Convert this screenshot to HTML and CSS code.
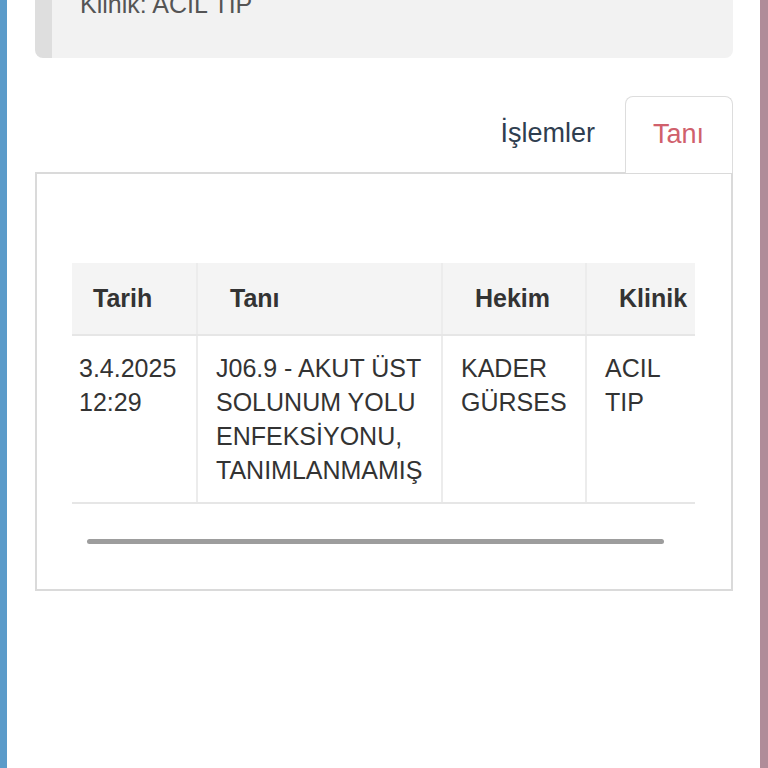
FILE: index.html
```html
<!DOCTYPE html>
<html lang="tr">
<head>
    <meta charset="UTF-8">
    <meta name="viewport" content="width=device-width, initial-scale=1.0">
    <link rel="stylesheet" href="styles.css">
    <title>Tanı</title>
</head>
<body>
    <div class="frame">
        <div class="info-card">
            <p class="info-line">Klinik: ACIL TIP</p>
        </div>

        <div class="tabs">
            <span class="tab">İşlemler</span>
            <span class="tab active">Tanı</span>
        </div>

        <div class="tab-panel">
            <div class="table-scroll">
                <table class="diag-table">
                    <thead>
                        <tr>
                            <th class="col-date">Tarih</th>
                            <th class="col-diag">Tanı</th>
                            <th class="col-doc">Hekim</th>
                            <th class="col-clinic">Klinik</th>
                        </tr>
                    </thead>
                    <tbody>
                        <tr>
                            <td>3.4.2025<br>12:29</td>
                            <td>J06.9 - AKUT ÜST<br>SOLUNUM YOLU<br>ENFEKSİYONU,<br>TANIMLANMAMIŞ</td>
                            <td>KADER<br>GÜRSES</td>
                            <td>ACIL<br>TIP</td>
                        </tr>
                    </tbody>
                </table>
            </div>
            <div class="scroll-track">
                <div class="scroll-thumb"></div>
            </div>
        </div>
    </div>
</body>
</html>
```

FILE: styles.css
```css
html, body {
    margin: 0;
    padding: 0;
    height: 100%;
}
body {
    background-color: #fff;
    font-family: "Liberation Sans", Arial, sans-serif;
    color: #333;
    border-left: 7px solid #5b9bc9; /* 左侧蓝条 */
    border-right: 8px solid #b08c99; /* 右侧色条 */
    box-sizing: border-box;
    overflow: hidden;
}
.frame {
    padding: 0 27px 0 28px;
}

/* 顶部信息卡 */
.info-card {
    margin-top: -40px;
    height: 98px;
    background-color: #f2f2f2;
    border-left: 17px solid #dedede;
    border-radius: 0 0 8px 8px;
    padding-left: 28px;
}
.info-line {
    margin: 0;
    padding-top: 30px;
    font-size: 25px;
    color: #555;
}

/* 标签页 */
.tabs {
    display: flex;
    justify-content: flex-end;
    align-items: stretch;
    margin-top: 38px;
    height: 76px;
    position: relative;
    z-index: 1;
}
.tab {
    display: flex;
    align-items: center;
    padding: 0 29px 2px;
    font-size: 27px;
    color: #2f3e50;
    border: 1px solid transparent;
    border-bottom: none;
}
.tab.active {
    color: #d0606c;
    background-color: #fff;
    border-color: #ddd;
    border-radius: 8px 8px 0 0;
    padding: 0 28px 2px 27px;
    margin-bottom: -1px;
}

.tab-panel {
    border: 2px solid #dadada;
    padding: 89px 36px 0 35px;
    height: 326px;
}

/* 表格 */
.table-scroll {
    overflow: hidden;
    width: 623px;
}
.diag-table {
    border-collapse: collapse;
    margin-left: -11px;
    font-size: 25px;
    table-layout: fixed;
    width: 720px;
}
.diag-table th,
.diag-table td {
    box-sizing: border-box;
}
.diag-table th {
    background-color: #f4f4f4;
    height: 72px;
    padding: 0 0 0 32px;
    text-align: left;
    font-weight: bold;
    color: #333;
    border-left: 2px solid #ececec;
    border-bottom: 2px solid #e6e6e6;
}
.diag-table td {
    vertical-align: top;
    padding: 15px 4px 15px 18px;
    line-height: 34px;
    border-left: 2px solid #ececec;
    border-bottom: 2px solid #e6e6e6;
    color: #333;
}
.diag-table th:first-child,
.diag-table td:first-child {
    border-left: none;
}
.col-date { width: 136px; }
.col-diag { width: 245px; }
.col-doc { width: 144px; }
.col-clinic { width: 195px; }

/* 滚动条 */
.scroll-track {
    padding: 35px 31px 0 15px;
}
.scroll-thumb {
    height: 5px;
    background-color: #9d9d9d;
    border-radius: 3px;
}
```
